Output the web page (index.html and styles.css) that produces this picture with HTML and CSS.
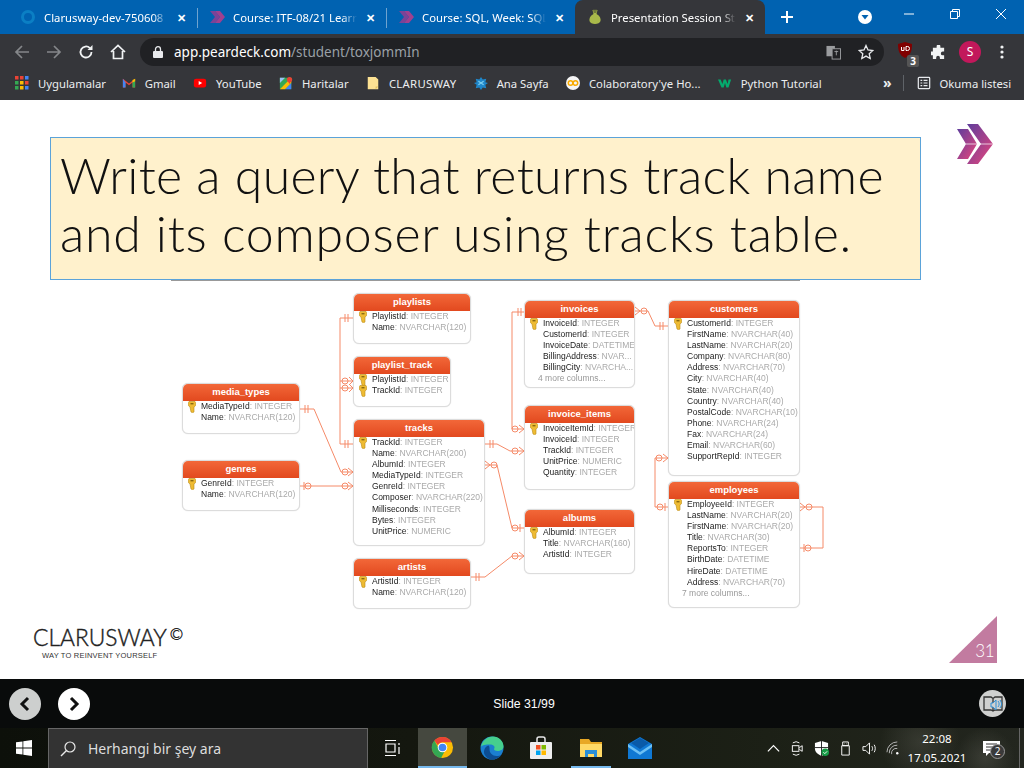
FILE: index.html
```html
<!DOCTYPE html>
<html lang="en">
<head>
    <meta charset="UTF-8">
    <title>Presentation Session</title>
    <link rel="stylesheet" href="styles.css">
</head>
<body>

<svg class="defs" width="0" height="0">
    <defs>
        <linearGradient id="chev" x1="0" y1="0" x2="1" y2="1">
            <stop offset="0" stop-color="#5f3d9c"/>
            <stop offset="1" stop-color="#e8467c"/>
        </linearGradient>
        <symbol id="peak" viewBox="0 0 16 16">
            <path d="M1 2h5l5 6-5 6H1l5-6z" fill="#7b4397"/>
            <path d="M6 2h5l5 6-5 6H6l5-6z" fill="#a0408f"/>
        </symbol>
        <symbol id="key" viewBox="0 0 8 12">
            <path d="M1 .5h6l.7 1v3L6 6v5L4.500 11.800 3 11 2 6 .3 4.500v-3z" fill="#eebb33" stroke="#b98a1a" stroke-width=".6"/>
            <rect x="2.500" y="2" width="3" height="1.400" fill="#8a6a10"/>
        </symbol>
    </defs>
</svg>

<div class="tabstrip">
    <div class="tab">
        <svg class="tab-icon" viewBox="0 0 16 16"><circle cx="8" cy="8" r="5.500" fill="none" stroke="#0b7fc4" stroke-width="3"/></svg>
        <span class="tab-title">Clarusway-dev-750608</span>
        <span class="tab-close">✕</span>
    </div>
    <div class="tab">
        <svg class="tab-icon"><use href="#peak"/></svg>
        <span class="tab-title">Course: ITF-08/21 Learn</span>
        <span class="tab-close">✕</span>
    </div>
    <div class="tab">
        <svg class="tab-icon"><use href="#peak"/></svg>
        <span class="tab-title">Course: SQL, Week: SQL</span>
        <span class="tab-close">✕</span>
    </div>
    <div class="tab tab-active">
        <svg class="tab-icon" viewBox="0 0 16 16"><path d="M5.500 1h5L9.500 5C13 7 14 9.500 13.500 12c-.5 2-3 3-5.500 3s-5-1-5.500-3C2 9.500 3 7 6.500 5z" fill="#a9b94a"/><path d="M6 .8h4L9.300 4H6.700z" fill="#6f7a3a"/></svg>
        <span class="tab-title">Presentation Session Stu</span>
        <span class="tab-close">✕</span>
    </div>
    <svg class="new-tab" viewBox="0 0 14 14"><path d="M7 1v12M1 7h12" stroke="#fff" stroke-width="2"/></svg>
    <svg class="profile-drop" viewBox="0 0 14 14"><circle cx="7" cy="7" r="7" fill="#fff"/><path d="M3.500 5h7L7 9.500z" fill="#0062b1"/></svg>
    <div class="win-btn"><svg width="12" height="12" viewBox="0 0 12 12"><path d="M1 6h10" stroke="#fff"/></svg></div>
    <div class="win-btn"><svg width="12" height="12" viewBox="0 0 12 12"><path d="M1.500 3.500h7v7h-7zM3.500 3.500v-2h7v7h-2" fill="none" stroke="#fff"/></svg></div>
    <div class="win-btn"><svg width="12" height="12" viewBox="0 0 12 12"><path d="M1 1l10 10M11 1L1 11" stroke="#fff"/></svg></div>
</div>

<div class="toolbar">
    <svg class="tool" viewBox="0 0 16 16"><path d="M15 8H2M8 2L2 8l6 6" fill="none" stroke="#85878a" stroke-width="1.700"/></svg>
    <svg class="tool" viewBox="0 0 16 16"><path d="M1 8h13M8 2l6 6-6 6" fill="none" stroke="#85878a" stroke-width="1.700"/></svg>
    <svg class="tool" viewBox="0 0 16 16"><path d="M13.500 8a5.500 5.500 0 1 1-1.600-3.900" fill="none" stroke="#f1f3f4" stroke-width="1.800"/><path d="M14.500 1v5h-5z" fill="#f1f3f4"/></svg>
    <svg class="tool" viewBox="0 0 16 16"><path d="M1 8l7-6.500L15 8M3.500 7v7.500h9V7" fill="none" stroke="#f1f3f4" stroke-width="1.700"/></svg>
    <div class="omnibox">
        <svg class="lock" viewBox="0 0 10 12"><rect y="5" width="10" height="7" rx="1" fill="#e8eaed"/><path d="M2.500 5V3.200a2.500 2.500 0 0 1 5 0V5" fill="none" stroke="#e8eaed" stroke-width="1.300"/></svg>
        <span class="url"><span class="url-host">app.peardeck.com</span>/student/toxjommIn</span>
        <svg class="omni-translate" viewBox="0 0 16 16"><rect x="0.500" y="1" width="9" height="11" fill="#9a9c9f"/><rect x="6.500" y="4" width="9" height="11" fill="#202124" stroke="#9a9c9f"/><path d="M9 7h4M11 6v5" stroke="#9a9c9f"/></svg>
        <svg class="omni-star" viewBox="0 0 16 16"><path d="M8 1.500l2 4.500 4.800.5-3.600 3.200 1 4.800L8 12.100l-4.200 2.400 1-4.800L1.200 6.500 6 6z" fill="none" stroke="#e8eaed" stroke-width="1.300"/></svg>
    </div>
    <div class="ublock">
        <svg class="ublock-shield" viewBox="0 0 14 16"><path d="M7 0l7 2c0 6-1 11-7 14C1 13 0 8 0 2z" fill="#800000"/><path d="M3.500 5v3.500h2.500V5M8 4.500v4h1.500a2 2 0 0 0 0-4z" fill="none" stroke="#fff" stroke-width="1"/></svg>
        <span class="ublock-badge">3</span>
    </div>
    <svg class="ext" viewBox="0 0 16 16"><path d="M6 1.500a2 2 0 0 1 4 0V3h4v4h-1.500a2 2 0 0 0 0 4H14v4H9.500v-1.500a2 2 0 0 0-4 0V15H2v-4H.5a2 2 0 0 1 0-4H2V3h4z" fill="#f1f3f4"/></svg>
    <div class="avatar">S</div>
    <svg class="kebab" viewBox="0 0 4 14"><circle cx="2" cy="2" r="1.600" fill="#f1f3f4"/><circle cx="2" cy="7" r="1.600" fill="#f1f3f4"/><circle cx="2" cy="12" r="1.600" fill="#f1f3f4"/></svg>
</div>

<div class="bookmarks">
    <div class="bm bm-first">
        <svg class="bm-icon" viewBox="0 0 14 14">
            <rect width="3.500" height="3.500" fill="#ea4335"/><rect x="5" width="3.500" height="3.500" fill="#ea4335"/><rect x="10" width="3.500" height="3.500" fill="#4285f4"/>
            <rect y="5" width="3.500" height="3.500" fill="#34a853"/><rect x="5" y="5" width="3.500" height="3.500" fill="#fbbc04"/><rect x="10" y="5" width="3.500" height="3.500" fill="#ea4335"/>
            <rect y="10" width="3.500" height="3.500" fill="#34a853"/><rect x="5" y="10" width="3.500" height="3.500" fill="#fbbc04"/><rect x="10" y="10" width="3.500" height="3.500" fill="#4285f4"/>
        </svg>
        <span>Uygulamalar</span>
    </div>
    <div class="bm">
        <svg class="bm-icon" viewBox="0 0 16 16"><path d="M1 3l7 5.500L15 3v10h-3V7.500L8 10.500 4 7.500V13H1z" fill="#ea4335"/><path d="M1 3v10h3V7.500z" fill="#4285f4"/><path d="M15 3v10h-3V7.500z" fill="#34a853"/><path d="M12 4.500L15 3v3l-3 1.500z" fill="#fbbc04"/></svg>
        <span>Gmail</span>
    </div>
    <div class="bm">
        <svg class="bm-icon" viewBox="0 0 16 16"><rect x="1" y="3" width="14" height="10" rx="2.500" fill="#f00"/><path d="M6.500 5.800v4.400L10.500 8z" fill="#fff"/></svg>
        <span>YouTube</span>
    </div>
    <div class="bm">
        <svg class="bm-icon" viewBox="0 0 16 16"><rect x="1" y="2" width="13" height="13" fill="#34a853"/><path d="M1 15L14 2v6l-7 7z" fill="#fbbc04"/><path d="M7 15l7-7v7z" fill="#4285f4"/><path d="M1 2h6L1 8z" fill="#9ac2f5"/><circle cx="12" cy="4" r="3" fill="#ea4335"/><path d="M9.800 5.500L12 9l2.200-3.500z" fill="#ea4335"/></svg>
        <span>Haritalar</span>
    </div>
    <div class="bm">
        <svg class="bm-icon" viewBox="0 0 16 16"><path d="M2 1h9l3 3v11H2z" fill="#fde293"/><path d="M11 15l3-3h-3z" fill="#e0c060"/></svg>
        <span class="bm-caps">CLARUSWAY</span>
    </div>
    <div class="bm">
        <svg class="bm-icon" viewBox="0 0 16 16"><path d="M8 1l2 3 4-1-1 4 3 1-3 2 1 4-4-1-2 3-2-3-4 1 1-4-3-2 3-1-1-4 4 1z" fill="#1f86c9"/><path d="M5 6l6 4M11 6l-6 4" stroke="#7fd0f0" stroke-width="1.200"/></svg>
        <span>Ana Sayfa</span>
    </div>
    <div class="bm">
        <svg class="bm-icon" viewBox="0 0 16 16"><circle cx="8" cy="8" r="8" fill="#f5f5f5"/><circle cx="5.200" cy="8" r="2.600" fill="none" stroke="#f9ab00" stroke-width="1.700"/><circle cx="10.800" cy="8" r="2.600" fill="none" stroke="#f9ab00" stroke-width="1.700"/></svg>
        <span>Colaboratory'ye Ho...</span>
    </div>
    <div class="bm">
        <svg class="bm-icon" viewBox="0 0 16 16"><path d="M0 4h3l2 5 1.500-5h2.500l2 5 1-5h3l-3 9h-2.500L8 8l-1.500 5H4z" fill="#04aa6d"/></svg>
        <span>Python Tutorial</span>
    </div>
    <span class="bm-more">»</span>
    <span class="bm-sep"></span>
    <div class="bm bm-reading">
        <svg class="bm-icon" viewBox="0 0 16 16"><rect x="1.500" y="1.500" width="13" height="13" rx="1" fill="none" stroke="#e8eaed" stroke-width="1.400"/><path d="M4 5h2M7.500 5H12M4 8h2M7.500 8H12M4 11h2M7.500 11H12" stroke="#e8eaed" stroke-width="1.400"/></svg>
        <span>Okuma listesi</span>
    </div>
</div>

<div class="slide">
    <svg class="slide-mark" viewBox="0 0 36 40">
        <path d="M0 5h11l9 15-9 15H0l9-15z" fill="url(#chev)"/>
        <path d="M10 0h11l15 20-15 20H10l14-20z" fill="url(#chev)"/>
        <path d="M9 20h27" stroke="#fff" stroke-width=".7"/>
    </svg>

    <div class="title-box">
        <span class="title-line line-1">Write a query that returns track name</span>
        <span class="title-line line-2">and its composer using tracks table.</span>
    </div>

    <div class="diagram">
        <svg class="links" width="660" height="340" viewBox="171 280 660 340">
            <g class="link-lines">
                <path d="M353 318H340V444H353M340 381H353M340 388H353"/>
                <path d="M300 409H314L341 472H353M300 486H353"/>
                <path d="M485 444H497L510 451H524M485 465H497L512 528H524M471 577H485L512 556H524"/>
                <path d="M524 312H512V429H524"/>
                <path d="M635 311H648L655 326H668"/>
                <path d="M668 458H655V507H668"/>
                <path d="M800 507H823V548H800"/>
                <!-- one side ticks -->
                <path d="M345 314v8M348 314v8M345 440v8M348 440v8M305 405v8M308 405v8M304 482v8M476 573v8M479 573v8M490 440v8M493 440v8M518 308v8M521 308v8M660 322v8M663 322v8M520 524v8M665 503v8M804 544v8"/>
                <!-- crow feet -->
                <path d="M349 377L353 381L349 385M349 384L353 388L349 392M348 468L353 472L348 476M348 482L353 486L348 490M519 425L524 429L519 433M519 447L524 451L519 455M519 552L524 556L519 560M635 307L640 311L635 315M663 454L668 458L663 462M485 461L490 465L485 469M800 503L805 507L800 511"/>
                <circle cx="345" cy="381" r="3"/>
                <circle cx="345" cy="388" r="3"/>
                <circle cx="345" cy="472" r="3"/>
                <circle cx="345" cy="486" r="3"/>
                <circle cx="308" cy="486" r="3"/>
                <circle cx="515" cy="429" r="3"/>
                <circle cx="515" cy="451" r="3"/>
                <circle cx="515" cy="528" r="3"/>
                <circle cx="515" cy="556" r="3"/>
                <circle cx="644" cy="311" r="3"/>
                <circle cx="659" cy="458" r="3"/>
                <circle cx="660" cy="507" r="3"/>
                <circle cx="494" cy="465" r="3"/>
                <circle cx="809" cy="507" r="3"/>
                <circle cx="808" cy="548" r="3"/>
            </g>
        </svg>

        <div class="tbl t-playlists">
            <div class="tbl-head">playlists</div>
            <svg class="key"><use href="#key"/></svg>
            <div class="row">PlaylistId<i>: INTEGER</i></div>
            <div class="row">Name<i>: NVARCHAR(120)</i></div>
        </div>
        <div class="tbl t-playlist-track">
            <div class="tbl-head">playlist_track</div>
            <svg class="key"><use href="#key"/></svg>
            <svg class="key key-2"><use href="#key"/></svg>
            <div class="row">PlaylistId<i>: INTEGER</i></div>
            <div class="row">TrackId<i>: INTEGER</i></div>
        </div>
        <div class="tbl t-media-types">
            <div class="tbl-head">media_types</div>
            <svg class="key"><use href="#key"/></svg>
            <div class="row">MediaTypeId<i>: INTEGER</i></div>
            <div class="row">Name<i>: NVARCHAR(120)</i></div>
        </div>
        <div class="tbl t-genres">
            <div class="tbl-head">genres</div>
            <svg class="key"><use href="#key"/></svg>
            <div class="row">GenreId<i>: INTEGER</i></div>
            <div class="row">Name<i>: NVARCHAR(120)</i></div>
        </div>
        <div class="tbl t-tracks">
            <div class="tbl-head">tracks</div>
            <svg class="key"><use href="#key"/></svg>
            <div class="row">TrackId<i>: INTEGER</i></div>
            <div class="row">Name<i>: NVARCHAR(200)</i></div>
            <div class="row">AlbumId<i>: INTEGER</i></div>
            <div class="row">MediaTypeId<i>: INTEGER</i></div>
            <div class="row">GenreId<i>: INTEGER</i></div>
            <div class="row">Composer<i>: NVARCHAR(220)</i></div>
            <div class="row">Milliseconds<i>: INTEGER</i></div>
            <div class="row">Bytes<i>: INTEGER</i></div>
            <div class="row">UnitPrice<i>: NUMERIC</i></div>
        </div>
        <div class="tbl t-artists">
            <div class="tbl-head">artists</div>
            <svg class="key"><use href="#key"/></svg>
            <div class="row">ArtistId<i>: INTEGER</i></div>
            <div class="row">Name<i>: NVARCHAR(120)</i></div>
        </div>
        <div class="tbl t-invoices">
            <div class="tbl-head">invoices</div>
            <svg class="key"><use href="#key"/></svg>
            <div class="row">InvoiceId<i>: INTEGER</i></div>
            <div class="row">CustomerId<i>: INTEGER</i></div>
            <div class="row">InvoiceDate<i>: DATETIME</i></div>
            <div class="row">BillingAddress<i>: NVAR...</i></div>
            <div class="row">BillingCity<i>: NVARCHA...</i></div>
            <div class="row row-more">4 more columns...</div>
        </div>
        <div class="tbl t-invoice-items">
            <div class="tbl-head">invoice_items</div>
            <svg class="key"><use href="#key"/></svg>
            <div class="row">InvoiceItemId<i>: INTEGER</i></div>
            <div class="row">InvoiceId<i>: INTEGER</i></div>
            <div class="row">TrackId<i>: INTEGER</i></div>
            <div class="row">UnitPrice<i>: NUMERIC</i></div>
            <div class="row">Quantity<i>: INTEGER</i></div>
        </div>
        <div class="tbl t-albums">
            <div class="tbl-head">albums</div>
            <svg class="key"><use href="#key"/></svg>
            <div class="row">AlbumId<i>: INTEGER</i></div>
            <div class="row">Title<i>: NVARCHAR(160)</i></div>
            <div class="row">ArtistId<i>: INTEGER</i></div>
        </div>
        <div class="tbl t-customers">
            <div class="tbl-head">customers</div>
            <svg class="key"><use href="#key"/></svg>
            <div class="row">CustomerId<i>: INTEGER</i></div>
            <div class="row">FirstName<i>: NVARCHAR(40)</i></div>
            <div class="row">LastName<i>: NVARCHAR(20)</i></div>
            <div class="row">Company<i>: NVARCHAR(80)</i></div>
            <div class="row">Address<i>: NVARCHAR(70)</i></div>
            <div class="row">City<i>: NVARCHAR(40)</i></div>
            <div class="row">State<i>: NVARCHAR(40)</i></div>
            <div class="row">Country<i>: NVARCHAR(40)</i></div>
            <div class="row">PostalCode<i>: NVARCHAR(10)</i></div>
            <div class="row">Phone<i>: NVARCHAR(24)</i></div>
            <div class="row">Fax<i>: NVARCHAR(24)</i></div>
            <div class="row">Email<i>: NVARCHAR(60)</i></div>
            <div class="row">SupportRepId<i>: INTEGER</i></div>
        </div>
        <div class="tbl t-employees">
            <div class="tbl-head">employees</div>
            <svg class="key"><use href="#key"/></svg>
            <div class="row">EmployeeId<i>: INTEGER</i></div>
            <div class="row">LastName<i>: NVARCHAR(20)</i></div>
            <div class="row">FirstName<i>: NVARCHAR(20)</i></div>
            <div class="row">Title<i>: NVARCHAR(30)</i></div>
            <div class="row">ReportsTo<i>: INTEGER</i></div>
            <div class="row">BirthDate<i>: DATETIME</i></div>
            <div class="row">HireDate<i>: DATETIME</i></div>
            <div class="row">Address<i>: NVARCHAR(70)</i></div>
            <div class="row row-more">7 more columns...</div>
        </div>
    </div>

    <div class="logo">
        <div class="logo-name">CLARUSWAY<span class="logo-c">©</span></div>
        <div class="logo-tag">WAY TO REINVENT YOURSELF</div>
    </div>

    <div class="page-num"><span>31</span></div>
</div>

<div class="deck-bar">
    <div class="deck-btn deck-prev"><svg width="12" height="16" viewBox="0 0 12 16"><path d="M9 2L3 8l6 6" fill="none" stroke="#111" stroke-width="3"/></svg></div>
    <div class="deck-btn deck-next"><svg width="12" height="16" viewBox="0 0 12 16"><path d="M3 2l6 6-6 6" fill="none" stroke="#111" stroke-width="3"/></svg></div>
    <div class="deck-count">Slide 31/99</div>
    <div class="deck-read">
        <svg width="20" height="18" viewBox="0 0 20 18"><path d="M1 2h7l2 1.500L12 2h7v13h-7l-2 1-2-1H1zM10 3.500V16" fill="none" stroke="#333" stroke-width="1.300"/><path d="M8 8h2l3-3v10l-3-3H8z" fill="#cfd0cf" stroke="#2d8fd5"/><path d="M15 6c1.500 2 1.500 4 0 6M17 5c2 3 2 5 0 8" fill="none" stroke="#2d8fd5"/></svg>
    </div>
</div>

<div class="taskbar">
    <svg class="win-logo" viewBox="0 0 16 16"><path d="M0 2.300l6.500-.9v6.200H0zM7.300 1.300L16 0v7.600H7.300zM0 8.400h6.500v6.200L0 13.700zM7.300 8.400H16V16l-8.700-1.200z" fill="#fff"/></svg>
    <div class="search">
        <svg class="search-icon" viewBox="0 0 16 16"><circle cx="10" cy="6" r="5" fill="none" stroke="#e8e8e8" stroke-width="1.200"/><path d="M6.500 9.500L1 15" stroke="#e8e8e8" stroke-width="1.400"/></svg>
        <span>Herhangi bir şey ara</span>
    </div>
    <div class="task"><svg width="16" height="16" viewBox="0 0 16 16"><path d="M0 .5h11M0 15.500h11M1 4h9v8H1zM14 3v2M14 7v7" fill="none" stroke="#fff" stroke-width="1.200"/></svg></div>
    <div class="task task-on">
        <svg width="23" height="23" viewBox="0 0 24 24">
            <circle cx="12" cy="12" r="11" fill="#fbbc04"/>
            <path d="M12 1a11 11 0 0 1 9.500 5.500H12a5.500 5.500 0 0 0-5 3L3.500 4.800A11 11 0 0 1 12 1z" fill="#ea4335"/>
            <path d="M3.500 4.800L8 13a5 5 0 0 0 6 3.500l-3.500 6.400A11 11 0 0 1 3.500 4.800z" fill="#34a853"/>
            <circle cx="12" cy="12" r="5" fill="#fff"/><circle cx="12" cy="12" r="4" fill="#4285f4"/>
        </svg>
    </div>
    <div class="task">
        <svg width="24" height="24" viewBox="0 0 24 24">
            <circle cx="12" cy="12" r="11.500" fill="#1b7fd0"/>
            <path d="M1 11C2 5 7 .5 13 .5c6 0 10.500 4.500 10.500 10 0 3-3 4.500-6 4.500-2 0-3.500-1-3.500-2 1.500-2 0-4.500-4-4.500C6 8.500 2 9 1 11z" fill="#45cf8e"/>
            <path d="M9.500 13.500c0 3.500 3 6.500 7 6.500 2 0 4-.5 5-1.500-2 3.500-6 5-9.500 5-3 0-6-2-7.500-5-1.500-3.500.5-8 4-9 1 1 1 2.500 1 4z" fill="#0c4d92"/>
        </svg>
    </div>
    <div class="task">
        <svg width="24" height="24" viewBox="0 0 24 24"><path d="M8 6V3a2 2 0 0 1 2-2h4a2 2 0 0 1 2 2v3" fill="none" stroke="#e8e8e8" stroke-width="1.500"/><rect x="1" y="6" width="22" height="17" rx="1" fill="#eee"/><rect x="7" y="9" width="4.500" height="4.500" fill="#f25022"/><rect x="12.500" y="9" width="4.500" height="4.500" fill="#7fba00"/><rect x="7" y="14.500" width="4.500" height="4.500" fill="#00a4ef"/><rect x="12.500" y="14.500" width="4.500" height="4.500" fill="#ffb900"/></svg>
    </div>
    <div class="task task-open">
        <svg width="24" height="24" viewBox="0 0 24 24"><path d="M1 3h9l2 3h11v15H1z" fill="#e8a825"/><rect x="1" y="8" width="22" height="13" fill="#ffd966"/><path d="M6 21v-7h12v7h-3v-3H9v3z" fill="#2a8fd8"/></svg>
    </div>
    <div class="task">
        <svg width="24" height="24" viewBox="0 0 24 24"><path d="M0 8l12-7 12 7v15H0z" fill="#0f78d4"/><path d="M0 8l12 8 12-8v3l-12 8-12-8z" fill="#6cc0f5"/><path d="M3 7l9-5 9 5-9 6z" fill="#0a5aa8"/></svg>
    </div>
    <div class="tray">
        <svg class="tray-icon" viewBox="0 0 16 16"><path d="M2 11l6-6 6 6" fill="none" stroke="#fff" stroke-width="1.300"/></svg>
        <svg class="tray-icon" viewBox="0 0 16 16"><path d="M3 2a6 6 0 0 1 7 0M3 14a6 6 0 0 0 7 0" fill="none" stroke="#fff"/><rect x="2.500" y="5" width="7" height="6" fill="none" stroke="#fff"/><path d="M10 7l3-2v6l-3-2" fill="none" stroke="#fff"/></svg>
        <svg class="tray-icon" viewBox="0 0 16 16"><path d="M8 0l7 2v6c0 4-3 6-7 8-4-2-7-4-7-8V2z" fill="#fff"/><path d="M8 0v16M1 7h14" stroke="#222"/><circle cx="12" cy="12" r="4" fill="#169c46"/><path d="M10 12l1.500 1.500L14 11" fill="none" stroke="#fff"/></svg>
        <svg class="tray-icon" viewBox="0 0 16 16"><path d="M5 1h6v4H5zM4 5h8v10H4z" fill="none" stroke="#fff"/><path d="M7 3h.5M9 3h.5" stroke="#fff"/></svg>
        <svg class="tray-icon" viewBox="0 0 16 16"><path d="M1 6h3l4-4v12l-4-4H1z" fill="none" stroke="#fff"/><path d="M10.500 5.500c1 1.500 1 3.500 0 5M13 4c1.500 2.500 1.500 5.500 0 8" fill="none" stroke="#fff"/></svg>
        <svg class="tray-icon" viewBox="0 0 16 16"><path d="M1 12a11 11 0 0 1 11-11M3.500 13a8 8 0 0 1 8.500-8.500M6 14a5 5 0 0 1 6-6" fill="none" stroke="#bbb"/><circle cx="12" cy="13" r="1.300" fill="#fff"/></svg>
    </div>
    <div class="clock">
        <div>22:08</div>
        <div>17.05.2021</div>
    </div>
    <div class="notif">
        <svg width="17" height="15" viewBox="0 0 17 15"><path d="M0 0h17v12H6l-3 3v-3H0z" fill="#fff"/><path d="M3 3h11M3 6h11M3 9h7" stroke="#333"/></svg>
        <span class="notif-badge">2</span>
    </div>
    <div class="show-desktop"></div>
</div>

</body>
</html>
```

FILE: styles.css
```css
* {
    box-sizing: border-box;
}
html, body {
    margin: 0;
    width: 1024px;
    height: 768px;
    overflow: hidden;
}
body {
    font-family: "Noto Sans", "Open Sans", sans-serif;
    font-size: 12px;
    background: #fff;
}
.defs {
    position: absolute;
}

/* browser chrome */
.tabstrip {
    height: 34px;
    background: #0062b1;
    display: flex;
    align-items: center;
    padding-left: 8px;
    color: #fff;
}
.tab {
    width: 189px;
    height: 34px;
    display: flex;
    align-items: center;
    padding: 0 8px 0 12px;
    position: relative;
}
.tab + .tab::before {
    content: "";
    position: absolute;
    left: 0;
    top: 8px;
    height: 20px;
    width: 1px;
    background: #6fa3cf;
}
.tab-active {
    width: 190px;
    background: #35363a;
    border-radius: 8px 8px 0 0;
}
.tab-active::before {
    display: none;
}
.tab-icon {
    width: 16px;
    height: 16px;
    flex: none;
    margin-right: 8px;
}
.tab-title {
    flex: 1;
    white-space: nowrap;
    overflow: hidden;
    font-size: 11.300px;
    -webkit-mask-image: linear-gradient(to right, #000 88%, transparent 100%);
    mask-image: linear-gradient(to right, #000 88%, transparent 100%);
}
.tab-close {
    width: 14px;
    margin-left: 6px;
    margin-right: 1px;
    text-align: center;
    font-size: 11px;
    font-weight: bold;
}
.new-tab {
    width: 14px;
    height: 14px;
    margin-left: 15px;
}
.profile-drop {
    width: 14px;
    height: 14px;
    margin-left: auto;
    margin-right: 14px;
}
.win-btn {
    width: 46px;
    height: 28px;
    align-self: flex-start;
    display: flex;
    align-items: center;
    justify-content: center;
}

.toolbar {
    height: 36px;
    background: #35363a;
    display: flex;
    align-items: center;
    padding-left: 14px;
    color: #fff;
}
.tool {
    width: 16px;
    height: 16px;
    margin-right: 16px;
    flex: none;
}
.omnibox {
    width: 744px;
    height: 28px;
    margin-left: -2px;
    background: #202124;
    border-radius: 14px;
    display: flex;
    align-items: center;
    padding-left: 13px;
}
.lock {
    width: 10px;
    height: 12px;
    margin-right: 11px;
}
.url {
    flex: 1;
    font-size: 13.500px;
    color: #9aa0a6;
}
.url-host {
    color: #fff;
}
.omni-translate {
    width: 15px;
    height: 15px;
    margin-right: 17px;
}
.omni-star {
    width: 16px;
    height: 16px;
    margin-right: 10px;
}
.ublock {
    width: 22px;
    height: 24px;
    margin-left: 14px;
    position: relative;
}
.ublock-shield {
    width: 14px;
    height: 16px;
    display: block;
    margin-top: 2px;
}
.ublock-badge {
    position: absolute;
    right: 1px;
    bottom: -3px;
    width: 12px;
    height: 12px;
    background: #555;
    border-radius: 2px;
    font-size: 10px;
    font-weight: bold;
    line-height: 12px;
    text-align: center;
}
.ext {
    width: 15px;
    height: 15px;
    margin-left: 11px;
}
.avatar {
    width: 22px;
    height: 22px;
    margin-left: 13px;
    background: #c2185b;
    border-radius: 50%;
    text-align: center;
    line-height: 22px;
    font-size: 12px;
}
.kebab {
    width: 4px;
    height: 14px;
    margin-left: 19px;
}

.bookmarks {
    height: 30px;
    padding: 0 0 4px 15px;
    background: #35363a;
    display: flex;
    align-items: center;
    color: #eceef0;
    font-size: 11.300px;
}
.bm {
    display: flex;
    align-items: center;
    margin-right: 17.300px;
    white-space: nowrap;
}
.bm-first {
    margin-right: 15.700px;
}
.bm-icon {
    width: 14px;
    height: 14px;
    margin-right: 9px;
    flex: none;
}
.bm-caps {
    letter-spacing: .3px;
}
.bm-more {
    margin-left: 44px;
    font-size: 14px;
    font-weight: bold;
    line-height: 14px;
}
.bm-sep {
    width: 1px;
    height: 16px;
    background: #5f6368;
    margin-left: 11px;
    margin-right: 13px;
}
.bm-reading {
    margin-right: 0;
}

/* slide */
.slide {
    height: 579px;
    background: #fff;
    position: relative;
    padding-top: 37px;
}
.slide-mark {
    position: absolute;
    left: 957px;
    top: 24px;
    width: 36px;
    height: 40px;
}
.title-box {
    width: 871px;
    height: 143px;
    margin-left: 50px;
    padding: 8px 0 0 9px;
    background: #fff1cc;
    border: 1px solid #5ba3d9;
    font-family: Lato, "Noto Sans", sans-serif;
    font-weight: 300;
    font-size: 50px;
    line-height: 58px;
    color: #111;
}
.title-line {
    display: block;
    white-space: nowrap;
}
.line-1 {
    letter-spacing: .32px;
}
.line-2 {
    letter-spacing: .75px;
}
.diagram {
    width: 660px;
    height: 340px;
    margin-left: 171px;
    position: relative;
    font-family: "Liberation Sans", Arial, sans-serif;
    filter: blur(.35px);
}
.diagram::before {
    content: "";
    position: absolute;
    left: 0;
    top: 0;
    width: 629px;
    height: 1px;
    background: #999;
}
.links {
    position: absolute;
    left: 0;
    top: 0;
}
.link-lines path, .link-lines circle {
    fill: none;
    stroke: #f58a68;
    stroke-width: 1;
}
.tbl {
    position: absolute;
    background: #fff;
    border: 1px solid #dcdcdc;
    border-radius: 6px;
    box-shadow: 0 0 1px rgba(0, 0, 0, .2);
    overflow: hidden;
}
.tbl-head {
    height: 18px;
    margin: -1px -1px 0;
    background: linear-gradient(#f3693a, #e2491f);
    color: #fff;
    font-size: 9.500px;
    font-weight: bold;
    line-height: 17px;
    text-align: center;
    border-radius: 6px 6px 0 0;
}
.row {
    height: 11.100px;
    padding-left: 18px;
    font-size: 8.500px;
    line-height: 11px;
    color: #222;
    white-space: nowrap;
    overflow: hidden;
}
.row i {
    font-style: normal;
    color: #aaa;
}
.row-more {
    padding-left: 13px;
    color: #999;
}
.key {
    position: absolute;
    left: 5px;
    top: 17px;
    width: 8px;
    height: 12px;
}
.key-2 {
    top: 28px;
}
.t-playlists { left: 182px; top: 13px; width: 118px; height: 51px; }
.t-playlist-track { left: 182px; top: 76px; width: 98px; height: 51px; }
.t-media-types { left: 11px; top: 103px; width: 118px; height: 51px; }
.t-genres { left: 11px; top: 180px; width: 118px; height: 51px; }
.t-tracks { left: 182px; top: 139px; width: 132px; height: 127px; }
.t-artists { left: 182px; top: 278px; width: 118px; height: 51px; }
.t-invoices { left: 353px; top: 20px; width: 111px; height: 88px; }
.t-invoice-items { left: 353px; top: 125px; width: 111px; height: 85px; }
.t-albums { left: 353px; top: 229px; width: 111px; height: 65px; }
.t-customers { left: 497px; top: 20px; width: 132px; height: 176px; }
.t-employees { left: 497px; top: 201px; width: 132px; height: 127px; }

.logo {
    position: absolute;
    left: 33px;
    top: 522px;
    color: #222;
}
.logo-name {
    font-family: Lato, "Noto Sans", sans-serif;
    font-weight: 300;
    -webkit-text-stroke: .4px #222;
    font-size: 22.800px;
    line-height: 24px;
    white-space: nowrap;
}
.logo-c {
    font-size: 16px;
    vertical-align: 6px;
    margin-left: 3px;
}
.logo-tag {
    margin: 2px 0 0 9px;
    font-family: "Liberation Sans", Arial, sans-serif;
    font-size: 7.500px;
    letter-spacing: .2px;
    color: #333;
}
.page-num {
    position: absolute;
    left: 949px;
    top: 516px;
    width: 48px;
    height: 47px;
    background: #c27ba0;
    clip-path: polygon(100% 0, 100% 100%, 0 100%);
    color: #fff;
    font-family: Lato, "Noto Sans", sans-serif;
    font-weight: 300;
    font-size: 17px;
    letter-spacing: -.5px;
}
.page-num span {
    position: absolute;
    right: 3px;
    bottom: 2px;
}

/* deck controls */
.deck-bar {
    height: 49px;
    background: #090b0b;
    display: flex;
    align-items: center;
    padding-left: 9px;
    color: #fff;
    position: relative;
}
.deck-btn {
    width: 32px;
    height: 32px;
    border-radius: 50%;
    display: flex;
    align-items: center;
    justify-content: center;
    margin-right: 17px;
}
.deck-prev {
    background: #cdcfce;
}
.deck-next {
    background: #fff;
}
.deck-count {
    margin-left: 367px;
    width: 100px;
    text-align: center;
    font-size: 12.300px;
    font-family: "Liberation Sans", Arial, sans-serif;
}
.deck-read {
    width: 27px;
    height: 27px;
    border-radius: 50%;
    background: #cfd0cf;
    margin-left: auto;
    margin-right: 18px;
    display: flex;
    align-items: center;
    justify-content: center;
}

/* windows taskbar */
.taskbar {
    height: 40px;
    background:
        radial-gradient(circle at 920px 14px, rgba(120, 120, 110, .25), transparent 40px),
        radial-gradient(circle at 985px 30px, rgba(130, 130, 120, .25), transparent 30px),
        linear-gradient(90deg, #0d100a, #14170f 40%, #1c2016 75%, #23261f);
    display: flex;
    align-items: center;
    color: #fff;
    position: relative;
}
.win-logo {
    width: 16px;
    height: 16px;
    margin-left: 16px;
    flex: none;
}
.search {
    width: 320px;
    height: 40px;
    margin-left: 16px;
    background: #333;
    border: 1px solid #666;
    border-bottom: 0;
    display: flex;
    align-items: center;
    padding-left: 11px;
    color: #ddd;
    font-size: 14px;
}
.search-icon {
    width: 16px;
    height: 16px;
    margin-right: 12px;
}
.task {
    width: 49.500px;
    height: 40px;
    display: flex;
    align-items: center;
    justify-content: center;
    flex: none;
    position: relative;
}
.task-on {
    background: #45483f;
    border-bottom: 2px solid #76b9ed;
}
.task-open::after {
    content: "";
    position: absolute;
    left: 5px;
    right: 5px;
    bottom: 0;
    height: 2px;
    background: #76b9ed;
}
.tray {
    display: flex;
    align-items: center;
    padding-left: 101px;
}
.tray-icon {
    width: 15px;
    height: 15px;
    margin-right: 9px;
}
.clock {
    width: 60px;
    margin-left: -3px;
    text-align: center;
    font-size: 11.500px;
    line-height: 19px;
}
.notif {
    margin-left: 16px;
    position: relative;
    height: 15px;
}
.notif-badge {
    position: absolute;
    left: 7px;
    top: 3px;
    width: 15px;
    height: 15px;
    border-radius: 50%;
    background: #3a3a3a;
    border: 1px solid #999;
    font-size: 10px;
    line-height: 13px;
    text-align: center;
}
.show-desktop {
    position: absolute;
    right: 4px;
    top: 0;
    bottom: 0;
    width: 1px;
    background: #666;
}
```
